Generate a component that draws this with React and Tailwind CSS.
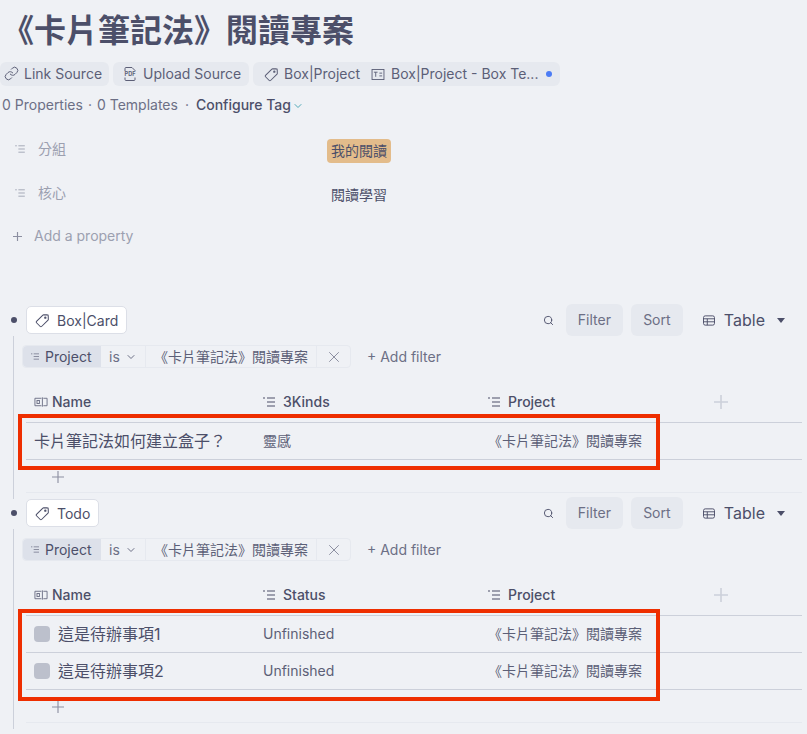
import React from "react";
import { Link, Search, X, ChevronDown } from "lucide-react";

const FONT = "font-['Inter','Noto_Sans_CJK_TC',sans-serif]";

function PlusIcon({ className = "", strokeWidth = 1.2 }) {
  return (
    <svg viewBox="0 0 14 14" className={className} fill="none" stroke="currentColor" strokeWidth={strokeWidth}>
      <path d="M7 0v14M0 7h14" />
    </svg>
  );
}

function ListIcon({ className = "" }) {
  return (
    <svg viewBox="0 0 12 10" className={className} fill="none" stroke="currentColor" strokeWidth="1.1">
      <path d="M0 1h2M4 1h8M4 5h8M4 9h8" />
    </svg>
  );
}

function TagIcon({ className = "" }) {
  return (
    <svg viewBox="0 0 16 16" className={className} fill="none" stroke="currentColor" strokeWidth="1.1" strokeLinejoin="round">
      <path d="M1.6 9 8.4 2.2a1 1 0 0 1 .7-.3l4.1.1a.9.9 0 0 1 .9.9l.1 4.1a1 1 0 0 1-.3.7L7 14.4a1 1 0 0 1-1.4 0L1.6 10.4a1 1 0 0 1 0-1.4Z" />
      <circle cx="11" cy="5" r=".7" />
    </svg>
  );
}

function NameIcon({ className = "" }) {
  return (
    <svg viewBox="0 0 15 10" className={className} fill="none" stroke="currentColor" strokeWidth="1">
      <path d="M8 1H1v8h7M10 1h4v8h-4M9 0v10" />
      <rect x="3.2" y="3.4" width="2.6" height="3.2" />
    </svg>
  );
}

function TableIcon({ className = "" }) {
  return (
    <svg viewBox="0 0 14 12" className={className} fill="none" stroke="currentColor" strokeWidth="1.1">
      <rect x=".6" y=".6" width="12.8" height="10.8" rx="2" />
      <path d="M.6 4h12.8M.6 7.5h12.8M5 4v7.4" />
    </svg>
  );
}

function PdfIcon({ className = "" }) {
  return (
    <svg viewBox="0 0 16 16" className={className} fill="none" stroke="currentColor" strokeWidth="1">
      <path d="M3 5V2.5a1 1 0 0 1 1-1h6l3 3V5M3 11.5v2a1 1 0 0 0 1 1h8a1 1 0 0 0 1-1v-2" />
      <text x="8" y="10.4" textAnchor="middle" fontSize="5.6" fontWeight="700" fill="currentColor" stroke="none" fontFamily="Inter, sans-serif">PDF</text>
    </svg>
  );
}

function TemplateIcon({ className = "" }) {
  return (
    <svg viewBox="0 0 14 12" className={className} fill="none" stroke="currentColor" strokeWidth="1">
      <rect x=".5" y=".5" width="13" height="11" />
      <path d="M2.5 3.5h4M4.5 3.5v5M8.5 4.5h3M8.5 7.5h3" />
    </svg>
  );
}

function Chip({ icon, children, className = "" }) {
  return (
    <div className={`h-6 flex items-center bg-[#e6e9ef] rounded-md ${className}`}>
      {icon}
      {children}
    </div>
  );
}

function Property({ label, children, className = "" }) {
  return (
    <div className={`flex ${className}`}>
      <div className="w-[327px] flex items-center pl-[15px] pb-[4px] text-[#9ca0b0] text-sm">
        <ListIcon className="w-[10px] h-[8px] mr-[13px]" />
        <span>{label}</span>
      </div>
      {children}
    </div>
  );
}

function Section({ tag, tagWidth, col2, rows, height }) {
  return (
    <div className="flex" style={{ height }}>
      <div className="w-[26px] shrink-0 flex flex-col items-start">
        <div className="h-[28px] w-full flex items-center pl-[11px]">
          <div className="w-[6px] h-[6px] rounded-full bg-[#4c4f69]" />
        </div>
        <div className="ml-[13px] mt-[2px] w-px flex-1 bg-[#ccd0da]" />
      </div>
      <div className="w-[776px] shrink-0">
        <div className="h-[28px] flex items-center">
          <div className={`h-[28px] flex items-center bg-white border border-[#dcdfe7] rounded-[5px] pl-[8px] pt-px text-sm text-[#4c4f69] ${tagWidth}`}>
            <TagIcon className="w-[15px] h-[15px] mr-[7px]" />
            {tag}
          </div>
          <div className="ml-auto flex items-center text-sm text-[#6c6f85]">
            <Search className="w-[11px] h-[11px] mr-[12px] text-[#4c4f69]" strokeWidth={2} />
            <div className="w-[57px] h-8 flex items-center justify-center rounded-md bg-[#e6e9ef]">Filter</div>
            <div className="w-[52px] h-8 flex items-center justify-center rounded-md bg-[#e6e9ef] ml-2">Sort</div>
            <TableIcon className="w-[12px] h-[11px] ml-5 text-[#4c4f69]" />
            <span className="ml-[9px] text-base text-[#4c4f69]">Table</span>
            <svg viewBox="0 0 8 5" className="w-2 h-[5px] ml-3 mr-[17px] text-[#4c4f69]" fill="currentColor"><path d="M0 0h8L4 5Z" /></svg>
          </div>
        </div>
        <div className="mt-[11px] -ml-[4px] h-[23px] flex items-center text-sm text-[#6c6f85]">
          <div className="h-full flex shrink-0 rounded-[4px] border border-[#e6e9ef] w-[329px]">
            <div className="w-[78px] bg-[#dde1ea] flex items-center pl-[8px] rounded-l-[4px] text-[#4c4f69]">
              <ListIcon className="w-[8px] h-[7px] mr-[6px] text-[#6c6f85]" />
              Project
            </div>
            <div className="w-[45px] flex items-center pl-2 border-r border-[#e6e9ef]">
              is<ChevronDown className="w-[12px] h-[12px] ml-[5px]" />
            </div>
            <div className="w-[171px] flex items-center justify-center border-r border-[#e6e9ef] text-[#5c5f77] whitespace-nowrap">《卡片筆記法》閱讀專案</div>
            <div className="flex-1 flex items-center justify-center"><X className="w-[18px] h-[18px]" strokeWidth={1} /></div>
          </div>
          <span className="ml-4 whitespace-nowrap">+ Add filter</span>
        </div>
        <div className="mt-[22px] h-[32px] pb-[8px] grid grid-cols-[237px_225px_225px_1fr] items-center text-sm font-medium text-[#4c4f69]">
          <div className="flex items-center pl-2">
            <NameIcon className="w-[14px] h-[10px] mr-1 text-[#6c6f85]" />Name
          </div>
          <div className="flex items-center">
            <ListIcon className="w-[12px] h-[10px] mr-2" />{col2}
          </div>
          <div className="flex items-center">
            <ListIcon className="w-[12px] h-[10px] mr-2" />Project
          </div>
          <div><PlusIcon className="w-[14px] h-[14px] ml-px text-[#ccd0da]" strokeWidth={1.6} /></div>
        </div>
        <div className="border-t border-[#ccd0da]">
          {rows.map((r, i) => (
            <div key={i} className="h-[37px] border-b border-[#ccd0da] grid grid-cols-[237px_225px_225px_1fr] items-center text-sm text-[#4c4f69]">
              <div className="flex items-center pl-2 text-base whitespace-nowrap">
                {r.check && <div className="w-4 h-4 mr-2 rounded-[4px] bg-[#bcc0cc]" />}
                {r.name}
              </div>
              <div className="text-[#5c5f77]">{r.value}</div>
              <div className="whitespace-nowrap text-[#5c5f77]">《卡片筆記法》閱讀專案</div>
            </div>
          ))}
        </div>
        <div className="h-[33px] border-b border-[#e6e9ef] flex items-center pl-[26px] pt-[2px]">
          <PlusIcon className="w-[12px] h-[12px] text-[#8c8fa1]" strokeWidth={1.3} />
        </div>
      </div>
    </div>
  );
}

export default function App() {
  return (
    <div className={`relative w-[807px] h-[734px] overflow-hidden bg-[#eff1f5] text-[#4c4f69] ${FONT}`}>
      <h1 className="h-[61px] pt-[10px] pl-[2px] text-[32px] leading-[42px] font-bold whitespace-nowrap">《卡片筆記法》閱讀專案</h1>
      <div className="flex items-center gap-1 text-sm text-[#5c5f77] whitespace-nowrap">
        <Chip className="w-[109px] pl-[4px]" icon={<Link className="w-[15px] h-[15px] mr-[5px]" strokeWidth={1.6} />}>Link Source</Chip>
        <Chip className="w-[136px] pl-[9px]" icon={<PdfIcon className="w-[16px] h-[16px] mr-[5px]" />}>Upload Source</Chip>
        <Chip className="w-[307px] pl-[11px] mt-[1px]" icon={<TagIcon className="w-[15px] h-[15px] mr-[5px]" />}>
          <span>Box|Project</span>
          <TemplateIcon className="w-[14px] h-[11px] ml-[11px] mr-[6px]" />
          <span>Box|Project - Box Te...</span>
          <span className="w-[6px] h-[6px] rounded-full bg-[#4c7cf5] ml-2" />
        </Chip>
      </div>
      <div className="mt-[8px] h-[22px] pl-[2px] flex items-center text-sm text-[#6c6f85] whitespace-nowrap">
        0 Properties<span className="mx-[5px]">·</span>0 Templates<span className="mx-[7px]">·</span>
        <span className="font-medium text-[#4c4f69]">Configure Tag</span>
        <ChevronDown className="w-[12px] h-[12px] ml-px mt-[1px] text-[#40a0b0]" strokeWidth={1.8} />
      </div>
      <div className="mt-[23px]">
        <Property label="分組" className="h-[24px] items-center">
          <div className="h-6 w-[64px] flex items-center justify-center rounded-[4px] bg-[#e3bc8b] text-sm text-[#4c4f69]">我的閱讀</div>
        </Property>
        <Property label="核心" className="h-[24px] mt-[20px] items-center">
          <div className="pl-[4px] text-sm text-[#4c4f69]">閱讀學習</div>
        </Property>
      </div>
      <div className="mt-[17px] h-[24px] pl-[13px] flex items-center text-sm text-[#9ca0b0]">
        <PlusIcon className="w-[9px] h-[9px] mr-[12px] text-[#8c8fa1]" strokeWidth={1.8} />
        Add a property
      </div>
      <div className="mt-[58px]">
        <Section
          tag="Box|Card"
          tagWidth="w-[101px]"
          col2="3Kinds"
          height={193}
          rows={[{ name: "卡片筆記法如何建立盒子？", value: "靈感" }]}
        />
        <Section
          tag="Todo"
          tagWidth="w-[73px]"
          col2="Status"
          height={230}
          rows={[
            { name: "這是待辦事項1", value: "Unfinished", check: true },
            { name: "這是待辦事項2", value: "Unfinished", check: true },
          ]}
        />
      </div>
      <div className="absolute left-[18px] top-[414px] w-[642px] h-[56px] border-4 border-[#ee2e00]" />
      <div className="absolute left-[18px] top-[609px] w-[642px] h-[92px] border-4 border-[#ee2e00]" />
    </div>
  );
}
